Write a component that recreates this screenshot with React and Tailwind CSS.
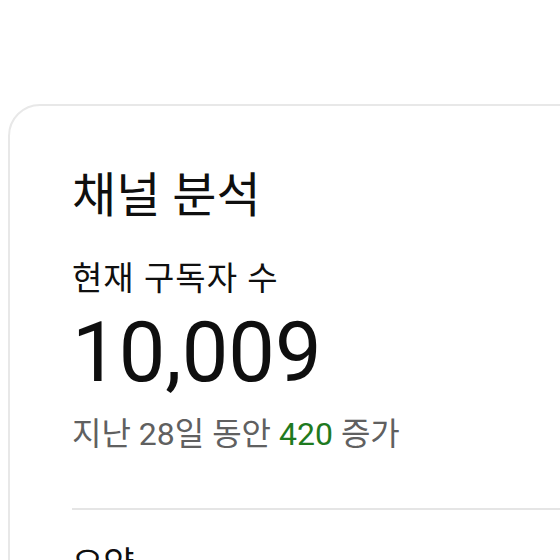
export default function App() {
  return (
    <div className="h-[560px] w-[560px] overflow-hidden bg-white font-['Roboto','Noto_Sans_CJK_KR',sans-serif]">
      <div className="ml-[8px] mt-[104px] h-[600px] w-[620px] rounded-[32px] border-2 border-[#e8e8e8] pl-[62px] pt-[60px]">
        <h2 className="text-[48px] leading-[60px] text-[#0f0f0f]">채널 분석</h2>
        <div className="mt-[33px] text-[33px] leading-[40px] tracking-[1px] text-[#0f0f0f]">현재 구독자 수</div>
        <div className="mt-[6px] text-[83px] leading-[96px] text-[#0f0f0f]">10,009</div>
        <div className="mt-[13px] text-[32px] leading-[40px] text-[#606060]">
          지난 28일 동안 <span className="text-[#1f7a1f]">420</span> 증가
        </div>
        <div className="mt-[54px] h-[2px] bg-[#e5e5e5]" />
        <div className="mt-[32px] text-[34px] leading-[44px] text-[#0f0f0f]">요약</div>
      </div>
    </div>
  )
}
